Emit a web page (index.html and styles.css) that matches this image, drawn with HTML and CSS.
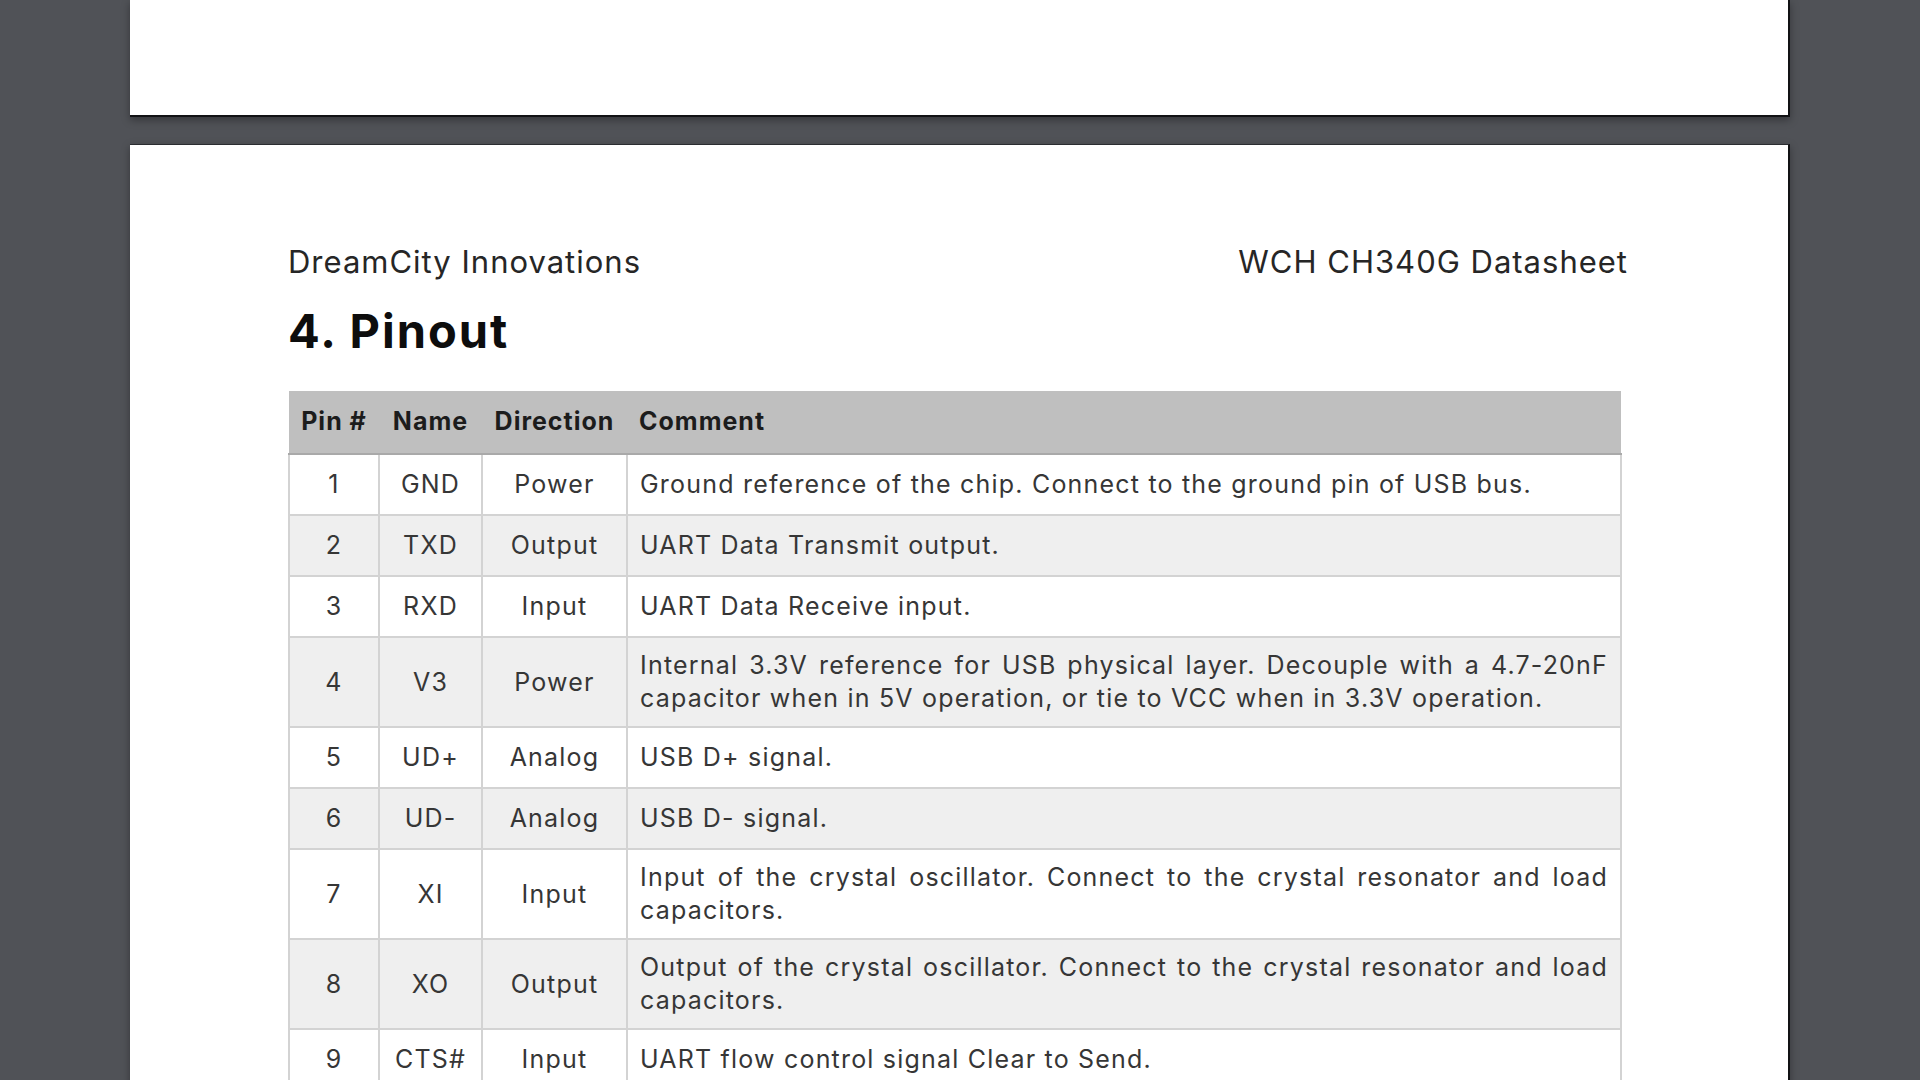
FILE: index.html
```html
<!DOCTYPE html>
<html lang="en">
<head>
<meta charset="utf-8">
<title>WCH CH340G Datasheet - Pinout</title>
<link rel="stylesheet" href="styles.css">
</head>
<body>
<div class="viewer">
  <div class="page page-prev"></div>
  <div class="page page-current">
    <div class="running-head">
      <span class="company">DreamCity Innovations</span>
      <span class="doc-title">WCH CH340G Datasheet</span>
    </div>
    <h1 class="section-title">4. Pinout</h1>
    <table class="pin-table">
      <colgroup>
        <col class="c-pin">
        <col class="c-name">
        <col class="c-dir">
        <col class="c-comment">
      </colgroup>
      <thead>
        <tr>
          <th>Pin #</th>
          <th>Name</th>
          <th>Direction</th>
          <th class="left">Comment</th>
        </tr>
      </thead>
      <tbody>
        <tr><td>1</td><td>GND</td><td>Power</td><td class="comment">Ground reference of the chip. Connect to the ground pin of USB bus.</td></tr>
        <tr><td>2</td><td>TXD</td><td>Output</td><td class="comment">UART Data Transmit output.</td></tr>
        <tr><td>3</td><td>RXD</td><td>Input</td><td class="comment">UART Data Receive input.</td></tr>
        <tr><td>4</td><td>V3</td><td>Power</td><td class="comment">Internal 3.3V reference for USB physical layer. Decouple with a 4.7-20nF capacitor when in 5V operation, or tie to VCC when in 3.3V operation.</td></tr>
        <tr><td>5</td><td>UD+</td><td>Analog</td><td class="comment">USB D+ signal.</td></tr>
        <tr><td>6</td><td>UD-</td><td>Analog</td><td class="comment">USB D- signal.</td></tr>
        <tr><td>7</td><td>XI</td><td>Input</td><td class="comment">Input of the crystal oscillator. Connect to the crystal resonator and load capacitors.</td></tr>
        <tr><td>8</td><td>XO</td><td>Output</td><td class="comment">Output of the crystal oscillator. Connect to the crystal resonator and load capacitors.</td></tr>
        <tr><td>9</td><td>CTS#</td><td>Input</td><td class="comment">UART flow control signal Clear to Send.</td></tr>
      </tbody>
    </table>
  </div>
</div>
</body>
</html>
```

FILE: styles.css
```css
html, body {
  margin: 0;
  padding: 0;
  height: 100%;
  overflow: hidden;
}

body {
  background: #505257;
  font-family: Inter, "Liberation Sans", sans-serif;
}

.viewer {
  display: flex;
  flex-direction: column;
  align-items: center;
  gap: 27px;
}

.page {
  width: 1660px;
  background: #ffffff;
  box-sizing: border-box;
  border-right: 2px solid #111214;
  box-shadow: 0 3px 8px rgba(0, 0, 0, 0.35);
}

.page-prev {
  height: 117px;
  border-bottom: 2px solid #111214;
}

.page-current {
  border-top: 1px solid #2a2c30;
  padding: 99px 160px 0 158px;
  min-height: 1200px;
}

.running-head {
  display: flex;
  justify-content: space-between;
  font-size: 31px;
  line-height: 36px;
  letter-spacing: 1px;
  color: #262626;
}

.section-title {
  margin: 23px 0 0 0;
  font-size: 47px;
  line-height: 56px;
  font-weight: 700;
  letter-spacing: 2px;
  color: #0d0d0d;
}

.pin-table {
  margin-top: 32px;
  width: 1334px;
  border-collapse: collapse;
  table-layout: fixed;
  font-size: 25px;
  line-height: 33px;
  letter-spacing: 1.2px;
  color: #363636;
}

.c-pin { width: 90px; }
.c-name { width: 103px; }
.c-dir { width: 145px; }

.pin-table th {
  background: #bfbfbf;
  color: #1c1c1c;
  font-weight: 700;
  letter-spacing: 1px;
  text-align: center;
  padding: 14px 0 15px;
  border-bottom: 2px solid #a9a9a9;
}

.pin-table th.left {
  text-align: left;
  padding-left: 12px;
}

.pin-table tbody tr {
  height: 61px;
}

.pin-table td {
  border: 2px solid #d3d3d3;
  text-align: center;
  vertical-align: middle;
  padding: 11px 0 11px;
}

.pin-table td.comment {
  text-align: justify;
  padding-left: 12px;
  padding-right: 12px;
}

.pin-table tbody tr:nth-child(even) td {
  background: #efefef;
}
```
